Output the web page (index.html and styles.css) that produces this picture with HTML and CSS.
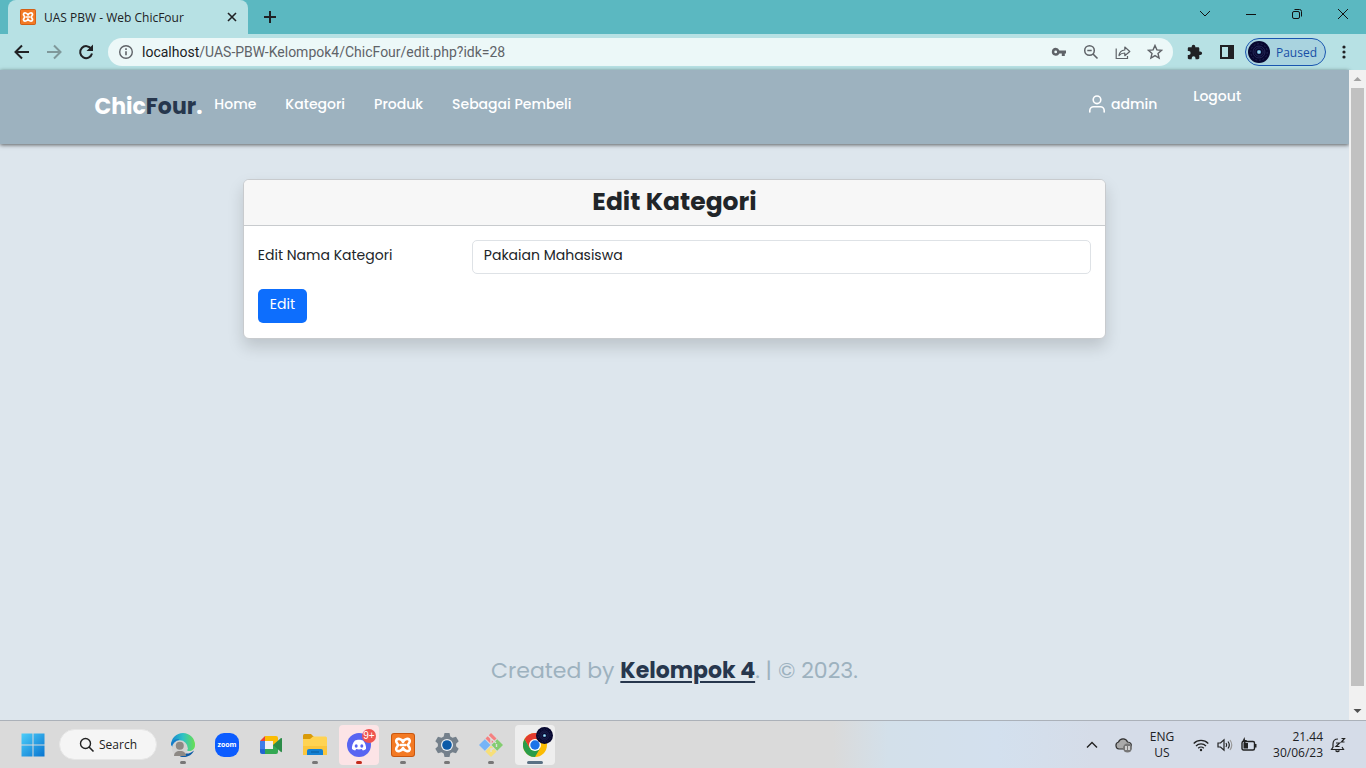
FILE: index.html
```html
<!DOCTYPE html>
<html lang="id">
<head>
<meta charset="utf-8">
<meta name="viewport" content="width=device-width, initial-scale=1">
<title>UAS PBW - Web ChicFour</title>
<link rel="stylesheet" href="styles.css">
</head>
<body>
<svg class="defs" aria-hidden="true">
  <symbol id="xampp" viewBox="0 0 24 24">
    <rect width="24" height="24" rx="3" fill="#c9570f"/>
    <rect x="1" y="1" width="22" height="22" rx="2" fill="#f37a24"/>
    <path d="M12 9C11 6 6 4.500 5.200 7.800 4.900 9.800 7 10.800 7 12s-2.100 2.200-1.800 4.200C6 19.500 11 18 12 15c1 3 6 4.500 6.800 1.200.3-2-1.800-3-1.800-4.200s2.100-2.200 1.800-4.200C18 4.500 13 6 12 9z" fill="none" stroke="#fff" stroke-width="2.600" stroke-linejoin="round"/>
    <path d="M9.500 12h5" stroke="#fff" stroke-width="2.600" stroke-linecap="round"/>
  </symbol>
  <symbol id="disc" viewBox="0 0 24 24">
    <circle cx="12" cy="12" r="12" fill="#07072f"/>
    <g fill="none" stroke="#34396a" stroke-width=".7"><circle cx="12" cy="12" r="4.500"/><circle cx="12" cy="12" r="6.500"/><circle cx="12" cy="12" r="9" stroke-dasharray="2 2"/></g>
    <circle cx="12" cy="12" r="2.200" fill="#6fb7dc"/><circle cx="12" cy="12" r=".7" fill="#fff"/>
  </symbol>
</svg>

<header class="tabstrip">
  <div class="tab">
    <svg class="i16"><use href="#xampp"/></svg>
    <span class="tab-title">UAS PBW - Web ChicFour</span>
    <button class="plain" aria-label="Close tab"><svg class="i16" viewBox="0 0 16 16"><path d="M4 4l8 8M12 4l-8 8" stroke="#202124" stroke-width="1.600"/></svg></button>
  </div>
  <button class="plain newtab" aria-label="New tab"><svg class="i16" viewBox="0 0 16 16"><path d="M8 2v12M2 8h12" stroke="#202124" stroke-width="2"/></svg></button>
  <div class="window-buttons">
    <button class="plain" aria-label="Search tabs"><svg class="i16" viewBox="0 0 16 16"><path d="M3 5l5 5 5-5" fill="none" stroke="#111"/></svg></button>
    <button class="plain" aria-label="Minimize"><svg class="i16" viewBox="0 0 16 16"><path d="M3 8.500h10" stroke="#111"/></svg></button>
    <button class="plain" aria-label="Restore"><svg class="i16" viewBox="0 0 16 16"><rect x="3.500" y="5.500" width="7" height="7" rx="1.500" fill="none" stroke="#111"/><path d="M5.500 3.500h5q2 0 2 2v5" fill="none" stroke="#111"/></svg></button>
    <button class="plain" aria-label="Close"><svg class="i16" viewBox="0 0 16 16"><path d="M3 3l10 10M13 3L3 13" stroke="#111"/></svg></button>
  </div>
</header>

<div class="toolbar">
  <div class="nav-buttons">
    <button class="plain" aria-label="Back"><svg class="i20" viewBox="0 0 20 20"><path d="M17 10H4M10 3.500L3.500 10l6.500 6.500" fill="none" stroke="#202124" stroke-width="2"/></svg></button>
    <button class="plain" aria-label="Forward"><svg class="i20" viewBox="0 0 20 20"><path d="M3 10h13M10 3.500l6.500 6.500-6.500 6.500" fill="none" stroke="#7f989a" stroke-width="2"/></svg></button>
    <button class="plain" aria-label="Reload"><svg class="i20" viewBox="0 0 20 20"><path d="M15.300 7A6 6 0 1 0 16 11.500" fill="none" stroke="#202124" stroke-width="2"/><path d="M17 2.500V9h-6.500z" fill="#202124"/></svg></button>
  </div>
  <div class="omnibox">
    <svg class="i16" viewBox="0 0 16 16"><circle cx="8" cy="8" r="6.300" fill="none" stroke="#5f6368" stroke-width="1.400"/><path d="M8 7.200v4M8 4.300v1.600" stroke="#5f6368" stroke-width="1.600"/></svg>
    <span class="url"><span class="host">localhost</span>/UAS-PBW-Kelompok4/ChicFour/edit.php?idk=28</span>
    <button class="plain" aria-label="Passwords"><svg class="i16" viewBox="0 0 16 16"><path fill-rule="evenodd" d="M4.700 3.800a4 4 0 0 1 3.700 2.600H15v3.200h-1.200V12h-3V9.600H8.400A4 4 0 1 1 4.700 3.800zM4.700 6.500a1.400 1.400 0 1 0 0 2.800 1.400 1.400 0 0 0 0-2.800z" fill="#5f6368"/></svg></button>
    <button class="plain" aria-label="Zoom out"><svg class="i16" viewBox="0 0 16 16"><circle cx="6.500" cy="6.500" r="4.800" fill="none" stroke="#5f6368" stroke-width="1.500"/><path d="M4.300 6.500h4.400M10 10l4.500 4.500" stroke="#5f6368" stroke-width="1.600"/></svg></button>
    <button class="plain" aria-label="Share"><svg class="i16" viewBox="0 0 16 16"><path d="M1.200 4.500V14.500h11.300V12" fill="none" stroke="#5f6368" stroke-width="1.200"/><path d="M4 11.500c.5-4 2.800-5.300 5.800-5.500V3l5 4.500-5 4.200V9C7.500 9 5.500 9.700 4 11.500z" fill="none" stroke="#5f6368" stroke-width="1.200" stroke-linejoin="round"/></svg></button>
    <button class="plain" aria-label="Bookmark"><svg class="i16" viewBox="0 0 16 16"><path d="M8 1.500l1.900 4.400 4.700.4-3.600 3.100 1.100 4.700L8 11.600l-4.100 2.500L5 9.400 1.400 6.300l4.700-.4z" fill="none" stroke="#5f6368" stroke-width="1.400"/></svg></button>
  </div>
  <div class="extensions">
    <button class="plain" aria-label="Extensions"><svg class="i16" viewBox="0 0 16 16"><path d="M13.300 7.500h-1V4.600c0-.8-.6-1.300-1.300-1.300H8.300V2.500a1.800 1.800 0 0 0-3.600 0v.8H2c-.7 0-1.200.5-1.200 1.300v2.500h.9a1.900 1.900 0 0 1 0 3.900H.8V14c0 .7.500 1.200 1.200 1.200h2.700v-1a1.900 1.900 0 0 1 3.800 0v1H11c.7 0 1.300-.5 1.300-1.200v-2.900h1a1.800 1.800 0 0 0 0-3.600z" fill="#202124"/></svg></button>
    <button class="plain" aria-label="Side panel"><svg class="i16" viewBox="0 0 16 16"><path fill-rule="evenodd" d="M1 1h14v14H1zM3 3v10h6V3z" fill="#202124"/></svg></button>
    <button class="profile"><svg class="avatar"><use href="#disc"/></svg>Paused</button>
    <button class="plain" aria-label="Menu"><svg class="i16" viewBox="0 0 16 16" fill="#202124"><circle cx="8" cy="3" r="1.600"/><circle cx="8" cy="8" r="1.600"/><circle cx="8" cy="13" r="1.600"/></svg></button>
  </div>
</div>

<div class="viewport">
  <div class="page">
    <nav class="navbar">
      <a class="brand" href="#">Chic<span>Four</span>.</a>
      <ul class="menu">
        <li><a href="#">Home</a></li>
        <li><a href="#">Kategori</a></li>
        <li><a href="#">Produk</a></li>
        <li><a href="#">Sebagai Pembeli</a></li>
      </ul>
      <a class="user" href="#"><svg class="i20" viewBox="0 0 20 20" fill="none" stroke="#fff" stroke-width="1.600" stroke-linecap="round"><circle cx="10" cy="5.800" r="3.800"/><path d="M2.800 18v-1.500a3.800 3.800 0 0 1 3.800-3.700h6.800a3.800 3.800 0 0 1 3.800 3.700V18"/></svg>admin</a>
      <a class="logout" href="#">Logout</a>
    </nav>
    <main class="main">
      <form class="card">
        <h1 class="card-header">Edit Kategori</h1>
        <div class="card-body">
          <div class="row">
            <label for="nama">Edit Nama Kategori</label>
            <input id="nama" type="text" value="Pakaian Mahasiswa">
          </div>
          <button class="submit" type="button">Edit</button>
        </div>
      </form>
    </main>
    <footer class="footer">Created by <a href="#">Kelompok 4</a>. | © 2023.</footer>
  </div>
  <div class="scrollbar" aria-hidden="true">
    <svg viewBox="0 0 17 17"><path d="M4.500 11L8.500 7l4 4z" fill="#a3a3a3"/></svg>
    <div class="thumb"></div>
    <svg viewBox="0 0 17 17"><path d="M4.500 6h8l-4 4z" fill="#505050"/></svg>
  </div>
</div>

<footer class="taskbar">
  <div class="apps">
    <button class="plain app" aria-label="Start"><svg viewBox="0 0 24 24"><defs><linearGradient id="w" gradientUnits="userSpaceOnUse" x1="0" y1="0" x2="24" y2="24"><stop stop-color="#4fd0fa"/><stop offset="1" stop-color="#0672cf"/></linearGradient></defs><path d="M.5.500h11v11H.5zM12.500.500h11v11h-11zM.5 12.500h11v11H.5zM12.500 12.500h11v11h-11z" fill="url(#w)"/></svg></button>
    <button class="search"><svg class="i16" viewBox="0 0 16 16"><circle cx="6.500" cy="6.500" r="5" fill="none" stroke="#222" stroke-width="1.400"/><path d="M10 10l4.500 4.500" stroke="#222" stroke-width="1.600"/></svg>Search</button>
    <button class="plain app run" aria-label="Edge"><svg viewBox="0 0 24 24"><defs><linearGradient id="e" x2="1"><stop stop-color="#1686cf"/><stop offset=".5" stop-color="#2fc2c5"/><stop offset="1" stop-color="#69df50"/></linearGradient></defs><path d="M0 12a12 12 0 0 1 24 0c0 4-3 6-6 6-3 0-4-2-3-4L9 9z" fill="url(#e)"/><path d="M10 18c4 4 9 3 13-.5C20 24 13 25 9 23.500z" fill="#0d5aa5"/><path d="M0 12c0-3 3-6 8-6l-5 10z" fill="#137cc9"/><circle cx="8.800" cy="15.300" r="8" fill="#d2d2d2"/><circle cx="8.800" cy="12.800" r="4" fill="#8d8985"/><path d="M3 23c0-3 2-5 6-5s6 2 6 5z" fill="#8d8985"/></svg></button>
    <button class="plain app" aria-label="Zoom"><svg viewBox="0 0 24 24"><rect width="24" height="24" rx="9" fill="#0b5cff"/><text x="12" y="14" text-anchor="middle" class="zoom-text">zoom</text></svg></button>
    <button class="plain app" aria-label="Meet"><svg viewBox="0 0 24 24"><path d="M1 8l5-5v5z" fill="#ea4335"/><path d="M6 3h11q2 0 2 2v7h-5V8H6z" fill="#fbbc04"/><path d="M1 8h5v8H1z" fill="#3f7de8"/><path d="M1 16h5v5H3q-2 0-2-2z" fill="#2264d2"/><path d="M6 16h8v-4h5v7q0 2-2 2H6z" fill="#34a853"/><path d="M14 12l8-7q1-.5 1 1v12q0 1.500-1 1z" fill="#2c8c48"/><path d="M6 8h8v8H6z" fill="#f0f0f0"/></svg></button>
    <button class="plain app run" aria-label="File Explorer"><svg viewBox="0 0 24 24"><path d="M0 2.500Q0 1 1.500 1H8l3 3v4H0z" fill="#d99a08"/><path d="M0 6h7l3-2.500h12.500q1.500 0 1.500 1.500v17H0z" fill="#ffd352"/><path d="M0 13h24v9H0z" fill="#fbc63c"/><path d="M4 18q0-2 2-2h12q2 0 2 2v4H4z" fill="#1380d3"/><path d="M8 19h8" stroke="#075a9c"/></svg></button>
    <button class="plain app discord run" aria-label="Discord"><svg viewBox="0 0 24 24"><circle cx="12" cy="12" r="12" fill="#5865f2"/><path d="M8 7.500c2-1 6-1 8 0 2 2 3.500 6 3 8.500-1 .8-2 1.200-3.200 1.500l-1-1.500c-1.800.5-3.800.5-5.600 0l-1 1.500C7 17.200 6 16.800 5 16c-.5-2.500 1-6.500 3-8.500z" fill="#fff"/><ellipse cx="9.200" cy="13" rx="1.500" ry="1.700" fill="#5865f2"/><ellipse cx="14.800" cy="13" rx="1.500" ry="1.700" fill="#5865f2"/></svg><span class="badge">9+</span></button>
    <button class="plain app run" aria-label="XAMPP"><svg><use href="#xampp"/></svg></button>
    <button class="plain app run" aria-label="Settings"><svg viewBox="0 0 24 24"><path d="M9.500 0h5l.8 3.500 2.200 1.200 3.500-1 2.700 4.500-2.600 2.500v2.600l2.600 2.500-2.700 4.500-3.500-1-2.200 1.200-.8 3.500h-5l-.8-3.500-2.200-1.200-3.500 1L.3 15.800l2.600-2.500v-2.600L.3 8.200 3 3.700l3.500 1 2.200-1.200z" fill="#74808b"/><circle cx="12" cy="12" r="6" fill="#eef1f4"/><circle cx="12" cy="12" r="4.800" fill="#0b5aa8"/></svg></button>
    <button class="plain app run" aria-label="Git"><svg viewBox="0 0 24 24"><path d="M12 0l5.500 5.500L12 11 6.500 5.500z" fill="#f58080"/><path d="M5.800 6.200l5.700 5.800-5.700 5.800L0 12z" fill="#76b4f7"/><path d="M18.200 6.200L24 12l-5.800 5.800-5.700-5.800z" fill="#83cd70"/><path d="M12 12.800l5.600 5.600L12 24l-5.600-5.600z" fill="#f7df79"/><path d="M8 1.500l4 4 5 4.500M12 6v5M17.500 11v3M12 15v4M12 17l3-2" fill="none" stroke="#dedede" stroke-width="1.400"/></svg></button>
    <button class="plain app active run" aria-label="Chrome"><svg viewBox="0 0 24 24"><circle cx="12" cy="12" r="12" fill="#fbbc04"/><path d="M1.600 6A12 12 0 0 0 12 24l5.200-9H6.800z" fill="#2a9d4a"/><path d="M1.600 6A12 12 0 0 1 22.400 6H12L6.800 15z" fill="#e33b2e"/><circle cx="12" cy="12" r="6" fill="#fff"/><circle cx="12" cy="12" r="4.700" fill="#1a73e8"/></svg><svg class="badge-disc"><use href="#disc"/></svg></button>
  </div>
  <div class="tray">
    <svg class="i16" viewBox="0 0 16 16"><path d="M3 10.500l5-5 5 5" fill="none" stroke="#222" stroke-width="1.400"/></svg>
    <svg class="i20 cloud" viewBox="0 0 20 20"><path d="M5 14a3.600 3.600 0 0 1-.5-7C6 3 12 2.500 13.500 7c3 0 4.500 2 3.500 4.500L13 14z" fill="#aaa" stroke="#333" stroke-width="1.200"/><circle cx="13.500" cy="13" r="4.500" fill="#777"/><path d="M12 11v4M15 11v4" stroke="#fff" stroke-width="1.300"/></svg>
    <div class="lang">ENG<br>US</div>
    <div class="status">
      <svg class="i16" viewBox="0 0 16 16" fill="none" stroke="#222" stroke-width="1.300"><path d="M.7 6.500a10.300 10.300 0 0 1 14.600 0M3 9a7 7 0 0 1 10 0M5.200 11.300a4 4 0 0 1 5.600 0"/><circle cx="8" cy="13" r="1.200" fill="#222" stroke="none"/></svg>
      <svg class="i16" viewBox="0 0 16 16" fill="none" stroke="#222" stroke-width="1.200"><path d="M1 6h2.500L7 2.800v10.400L3.500 10H1zM9 6q1.500 2 0 4M11 4.500q2.600 3.500 0 7"/><path d="M13 3q3.500 5 0 10" stroke="#999"/></svg>
      <svg class="i16" viewBox="0 0 16 16"><rect x="1" y="4.500" width="12.500" height="8.500" rx="1.500" fill="none" stroke="#222" stroke-width="1.400"/><path d="M2.500 6H7v5.500H2.500zM14 7h1.500v3.500H14z" fill="#222"/><path d="M3.500 0L1 5h2v3l3-5H4z" fill="#222"/></svg>
    </div>
    <div class="clock">21.44<br>30/06/23</div>
    <svg class="i16" viewBox="0 0 16 16" fill="none" stroke="#222" stroke-width="1.200"><path d="M8 2C4.500 2 3 4 3 7v3l-1.500 2.500h12L12 10M5.500 13.500q2 2 4 0M6 6h3.500L6 9.500h3.500M11.500 1.500h3l-3 3.500h3"/></svg>
  </div>
</footer>
</body>
</html>
```
FILE: styles.css
```css
* { box-sizing: border-box; }

body {
  margin: 0;
  height: 100vh;
  display: flex;
  flex-direction: column;
  overflow: hidden;
  font: 12px "Open Sans", sans-serif;
  color: #202124;
}

a { color: inherit; text-decoration: none; }
svg { display: block; flex: none; }
.defs { position: absolute; width: 0; height: 0; }
.i16 { width: 16px; height: 16px; }
.i20 { width: 20px; height: 20px; }
.plain { display: flex; align-items: center; justify-content: center; padding: 0; border: 0; background: none; }

/* Browser window */
.tabstrip { flex: none; display: flex; height: 34px; padding-left: 8px; background: #5bb8c1; }
.tab {
  display: flex;
  align-items: center;
  gap: 8px;
  width: 240px;
  padding: 0 8px 0 12px;
  border-radius: 8px 8px 0 0;
  background: #b7e1e4;
}
.tab-title { flex: 1; white-space: nowrap; }
.newtab { width: 44px; }
.window-buttons { display: flex; margin-left: auto; }
.window-buttons button { width: 46px; height: 28px; }

.toolbar { flex: none; display: flex; align-items: center; height: 36px; background: #b7e1e4; }
.nav-buttons { display: flex; gap: 12px; padding: 0 12px; }
.omnibox {
  flex: 1;
  display: flex;
  align-items: center;
  gap: 16px;
  height: 28px;
  padding: 0 10px;
  border-radius: 14px;
  background: #ecf8f8;
  font: 14px Roboto, sans-serif;
}
.url { flex: 1; margin-left: -8px; color: #5f6368; white-space: nowrap; }
.host { color: #202124; }
.extensions { display: flex; align-items: center; gap: 16px; padding: 0 14px; }
.profile {
  display: flex;
  align-items: center;
  gap: 6px;
  height: 28px;
  margin: 0 -6px;
  padding: 0 8px 0 2px;
  border: 1px solid #1a56b0;
  border-radius: 14px;
  background: #a9d3df;
  color: #174ea6;
  font: 12px "Open Sans", sans-serif;
}
.avatar { width: 22px; height: 22px; }

/* Web page */
.viewport { flex: 1; min-height: 0; display: flex; }
.page {
  flex: 1;
  display: flex;
  flex-direction: column;
  background: #dde6ed;
  font-family: Poppins, Inter, sans-serif;
  font-size: 14px;
}
.navbar {
  display: flex;
  align-items: flex-start;
  min-height: 74px;
  padding: 15px 8% 0 7%;
  background: #9db2bf;
  box-shadow: 0 1px 4px rgba(0, 0, 0, .6);
  color: #fff;
  font-weight: 500;
  line-height: 22px;
}
.brand { padding-top: 11px; font-size: 22px; font-weight: 700; }
.brand span { color: #27374d; }
.menu { display: flex; gap: 29px; margin: 0 0 0 12px; padding: 8px 0 0; list-style: none; }
.user { display: flex; align-items: center; gap: 4px; margin-left: auto; padding-top: 8px; }
.logout { margin-left: 36px; }

.main { flex: 1; padding-top: 35px; }
.card {
  width: 64%;
  margin: 0 auto;
  border: 1px solid #c8cbce;
  border-radius: 6px;
  background: #fff;
  box-shadow: 0 8px 16px rgba(0, 0, 0, .15);
  color: #212529;
}
.card-header {
  margin: 0;
  padding: 6px 14px 7px;
  border-bottom: 1px solid #c8cbce;
  border-radius: 5px 5px 0 0;
  background: #f7f7f7;
  font-size: 25px;
  font-weight: 700;
  line-height: 32px;
  text-align: center;
}
.card-body { padding: 14px 14px 15px; }
.row { display: flex; align-items: center; margin-bottom: 15px; }
.row label { width: 214px; padding-bottom: 3px; }
.row input {
  flex: 1;
  height: 34px;
  padding: 0 11px 3px;
  border: 1px solid #dee2e6;
  border-radius: 5px;
  color: #212529;
  font: inherit;
}
.submit {
  height: 34px;
  padding: 0 12px 3px;
  border: 0;
  border-radius: 5px;
  background: #0d6efd;
  color: #fff;
  font: inherit;
}
.footer { padding-bottom: 32px; color: #9db2bf; font-size: 22px; line-height: 34px; text-align: center; }
.footer a { color: #27374d; font-weight: 700; text-decoration: underline; text-underline-offset: 3px; }

.scrollbar { display: flex; flex-direction: column; width: 17px; background: #f1f1f1; }
.thumb { flex: 1; margin: 1px 2px 17px; background: #c1c1c1; }
.scrollbar svg { width: 17px; height: 17px; }

/* Taskbar */
.taskbar {
  flex: none;
  display: flex;
  align-items: center;
  justify-content: space-between;
  height: 48px;
  padding: 0 20px 0 13px;
  border-top: 1px solid #abb1b9;
  background: linear-gradient(90deg, #dadada 61%, #d3e0ea 65%, #d3e0ee 73%, #d5dce8 80%);
}
.apps { display: flex; align-items: center; gap: 4px; }
.app { position: relative; width: 40px; height: 40px; border-radius: 4px; }
.app svg { width: 24px; height: 24px; }
.run::after { content: ""; position: absolute; bottom: 1px; left: 17px; width: 6px; height: 3px; border-radius: 2px; background: #777; }
.search {
  display: flex;
  align-items: center;
  gap: 4px;
  height: 31px;
  margin: 0 2px;
  padding: 0 19px;
  border: 1px solid #e6e6e6;
  border-radius: 16px;
  background: #f5f5f5;
  color: #222;
  font: 12px "Open Sans", sans-serif;
}
.zoom-text { fill: #fff; font: 700 7px "Open Sans", sans-serif; }
.discord { background: #fce4e6; }
.discord::after { background: #c42b1c; }
.badge {
  position: absolute;
  top: 4px;
  right: 3px;
  width: 14px;
  height: 14px;
  border-radius: 7px;
  background: #ef5350;
  color: #fff;
  font-size: 10px;
  line-height: 14px;
}
.active { background: #eee; }
.active::after { left: 12px; width: 16px; background: #5a7184; }
.app .badge-disc { position: absolute; top: 2px; right: 2px; width: 17px; height: 17px; }
.tray { display: flex; align-items: center; line-height: 16px; }
.cloud { margin-left: 14px; }
.lang { width: 56px; text-align: center; }
.status { display: flex; gap: 8px; margin-left: 3px; }
.clock { width: 66px; margin-right: 7px; text-align: right; }
```
